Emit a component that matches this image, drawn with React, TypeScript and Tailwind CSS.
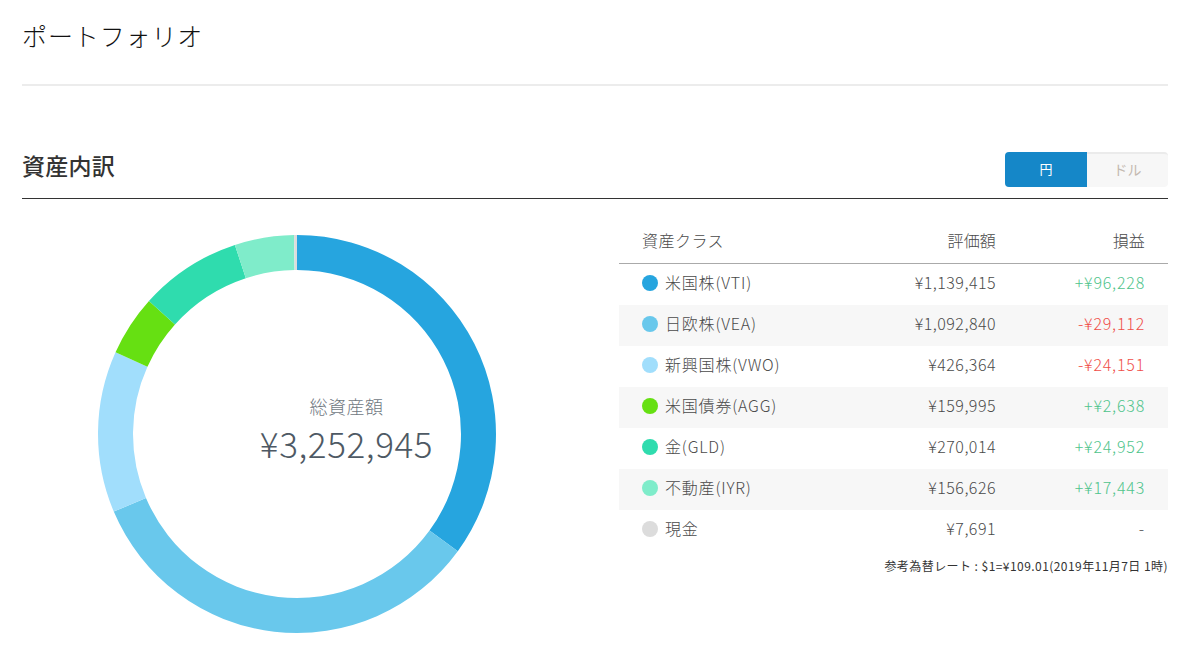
const font = "[font-family:'Noto_Sans_CJK_JP','Noto_Sans',sans-serif]";

const rows = [
  { name: "米国株(VTI)", color: "#26a5df", value: 1139415, amount: "¥1,139,415", gain: "+¥96,228", gainColor: "text-[#4fc48c]" },
  { name: "日欧株(VEA)", color: "#69c8ec", value: 1092840, amount: "¥1,092,840", gain: "-¥29,112", gainColor: "text-[#f04e48]" },
  { name: "新興国株(VWO)", color: "#a1defc", value: 426364, amount: "¥426,364", gain: "-¥24,151", gainColor: "text-[#f04e48]" },
  { name: "米国債券(AGG)", color: "#66e012", value: 159995, amount: "¥159,995", gain: "+¥2,638", gainColor: "text-[#4fc48c]" },
  { name: "金(GLD)", color: "#2fdcae", value: 270014, amount: "¥270,014", gain: "+¥24,952", gainColor: "text-[#4fc48c]" },
  { name: "不動産(IYR)", color: "#7fecca", value: 156626, amount: "¥156,626", gain: "+¥17,443", gainColor: "text-[#4fc48c]" },
  { name: "現金", color: "#dcdcdc", value: 7691, amount: "¥7,691", gain: "-", gainColor: "text-[#555555]" },
];

const total = rows.reduce((s, r) => s + r.value, 0);

function Donut() {
  const cx = 200, cy = 200, ro = 199, ri = 164;
  let acc = 0;
  const pt = (r: number, t: number) => {
    const a = t * 2 * Math.PI - Math.PI / 2;
    return `${(cx + r * Math.cos(a)).toFixed(2)} ${(cy + r * Math.sin(a)).toFixed(2)}`;
  };
  return (
    <svg width="400" height="400" viewBox="0 0 400 400" className="block">
      {rows.map((r) => {
        const s = acc / total;
        acc += r.value;
        const e = acc / total;
        const large = e - s > 0.5 ? 1 : 0;
        return (
          <path
            key={r.name}
            fill={r.color}
            d={`M ${pt(ro, s)} A ${ro} ${ro} 0 ${large} 1 ${pt(ro, e)} L ${pt(ri, e)} A ${ri} ${ri} 0 ${large} 0 ${pt(ri, s)} Z`}
          />
        );
      })}
    </svg>
  );
}

export default function App() {
  return (
    <div className={`${font} w-[1200px] h-[672px] overflow-hidden bg-white pl-[22px] pr-[32px] text-[#333333]`}>
      <div className="h-[86px] border-b-2 border-[#ececec] pt-[17px]">
        <h1 className="text-[25px] leading-[36px] font-light tracking-[0.035em] text-[#111111]">ポートフォリオ</h1>
      </div>
      <div className="mt-[66px] flex h-[47px] items-start justify-between border-b border-[#333333]">
        <h2 className="-mt-[3px] text-[23px] leading-[32px] font-medium tracking-[0.01em] text-[#333333]">資産内訳</h2>
        <div className="flex h-[35px] w-[163px] text-[13px]">
          <div className="flex w-[82px] items-center justify-center rounded-l-[4px] bg-[#1587c8] pb-[2px] text-white">円</div>
          <div className="flex flex-1 items-center justify-center rounded-r-[4px] border-t-2 border-[#ebebeb] bg-[#f7f7f7] pb-[3px] text-[14px] text-[#c4b9b0]">ドル</div>
        </div>
      </div>
      <div className="flex">
        <div className="relative ml-[75px] mt-[35px] h-[400px] w-[400px]">
          <Donut />
          <div className="absolute inset-0 flex flex-col items-center justify-center pb-[9px] pl-[99px]">
            <div className="translate-y-[1px] text-[18px] leading-[26px] font-light tracking-[0.03em] text-[#70787f]">総資産額</div>
            <div className="text-[35px] leading-[50px] font-light tracking-[0.017em] text-[#4e5964]">¥3,252,945</div>
          </div>
        </div>
        <div className="ml-[122px] flex-1">
          <div className="mt-[23px] flex h-[42px] items-center border-b border-[#aaaaaa] pb-[5px] pl-[23px] pr-[23px] text-[16px] font-light tracking-[0.01em] text-[#4a4a4a]">
            <div className="flex-1 tracking-[0.03em]">資産クラス</div>
            <div className="w-[120px] text-right">評価額</div>
            <div className="w-[149px] text-right">損益</div>
          </div>
          {rows.map((r, i) => (
            <div
              key={r.name}
              className={`flex h-[41px] items-center pl-[23px] pr-[23px] text-[16px] font-light tracking-[0.03em] text-[#4a4a4a] ${i % 2 === 1 ? "bg-[#f7f7f7]" : "bg-white"}`}
            >
              <span className="mb-[3px] mr-[7px] h-[16px] w-[16px] rounded-full" style={{ backgroundColor: r.color }} />
              <div className="mb-[6px] flex-1 tracking-[0.05em]">{r.name}</div>
              <div className="mb-[6px] w-[120px] text-right">{r.amount}</div>
              <div className={`mb-[6px] w-[149px] text-right tracking-[0.05em] ${r.gainColor}`}>{r.gain}</div>
            </div>
          ))}
          <div className="mt-[5px] text-right text-[12px] leading-[20px] tracking-[0.037em] text-[#333333]">参考為替レート : $1=¥109.01(2019年11月7日 1時)</div>
        </div>
      </div>
    </div>
  );
}
